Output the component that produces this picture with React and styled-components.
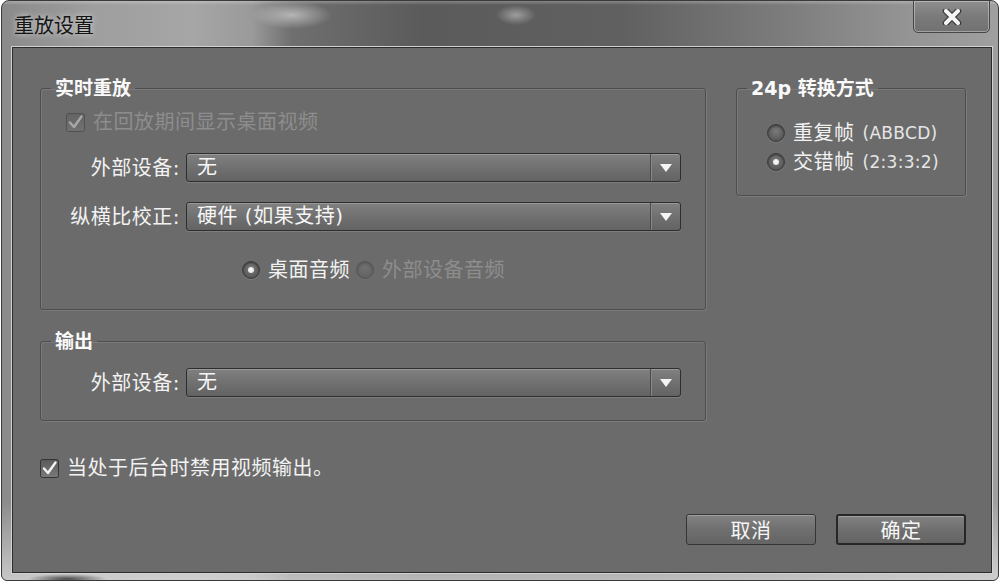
import React from 'react';
import styled, { createGlobalStyle } from 'styled-components';

const GlobalStyle = createGlobalStyle`
  html, body {
    margin: 0;
    padding: 0;
    background: #fff;
  }
  body {
    font-family: "DejaVu Sans", "Noto Sans CJK SC", sans-serif;
  }
  * {
    box-sizing: border-box;
  }
`;

const Window = styled.div`
  width: 998px;
  height: 581px;
  margin-left: 1px;
  border: 1px solid #3a3a3a;
  border-radius: 8px 8px 6px 6px;
  display: flex;
  flex-direction: column;
  overflow: hidden;
  background:
    radial-gradient(ellipse 40px 14px at 290px 14px, rgba(210,210,210,0.7), transparent),
    radial-gradient(ellipse 20px 10px at 514px 14px, rgba(200,200,200,0.6), transparent),
    radial-gradient(ellipse 40px 5px at 65px 578px, rgba(40,40,40,0.8), transparent),
    linear-gradient(180deg, rgba(255,255,255,0.25) 0, transparent 4px, transparent 500px, rgba(225,225,225,0.7) 100%),
    linear-gradient(90deg, #8a8a8a 0, #9e9e9e 90px, #a6a6a6 190px, #9a9a9a 250px, #6f6f6f 290px, #5b5b5b 420px, #606060 620px, #7c7c7c 780px, #939393 900px, #a0a0a0 100%);
`;

const TitleBar = styled.div`
  height: 46px;
  flex: none;
  display: flex;
  justify-content: space-between;
  align-items: flex-start;
  padding: 0 8px 0 12px;
`;

const Title = styled.div`
  margin-top: 11px;
  font-family: "Noto Sans CJK SC", sans-serif;
  font-size: 20px;
  line-height: 26px;
  color: #151515;
  text-shadow: 0 0 6px rgba(255, 255, 255, 0.75);
`;

const CloseButton = styled.div`
  width: 77px;
  height: 33px;
  margin-top: -1px;
  border: 1px solid #474747;
  border-radius: 0 0 5px 5px;
  background: linear-gradient(180deg, #8f8f8f, #7a7a7a 50%, #717171);
  box-shadow: inset 0 0 0 1px rgba(255, 255, 255, 0.35);
  display: flex;
  align-items: center;
  justify-content: center;
`;

const Frame = styled.div`
  flex: 1;
  display: flex;
  padding: 0 6px 7px 10px;
`;

const Client = styled.div`
  flex: 1;
  display: flex;
  flex-direction: column;
  background: #6b6b6b;
  border: 1px solid #2c2c2c;
  box-shadow: 0 0 0 1px #d2d2d2;
  padding: 28px 25px 0 27px;
  color: #f2f2f2;
  letter-spacing: 0.5px;
`;

const TopGrid = styled.div`
  display: grid;
  grid-template-columns: 666px 230px;
  column-gap: 30px;
  align-items: start;
`;

const Column = styled.div`
  display: flex;
  flex-direction: column;
  gap: 19px;
`;

const Group = styled.fieldset`
  margin: 0;
  min-width: 0;
  border: 1px solid #4e4e4e;
  border-radius: 3px;
  box-shadow: inset 1px 1px 0 rgba(255, 255, 255, 0.1), 1px 1px 0 rgba(255, 255, 255, 0.1);
  padding: ${(p) => p.$pad};
  display: flex;
  flex-direction: column;
`;

const Legend = styled.legend`
  margin-left: 10px;
  padding: 0 4px;
  font-family: "DejaVu Sans", "Noto Sans CJK SC", sans-serif;
  font-weight: bold;
  font-size: 19px;
  line-height: 24px;
  color: #fafafa;
  letter-spacing: 0;
`;

const CheckRow = styled.label`
  height: 24px;
  margin: ${(p) => p.$margin || 0};
  display: flex;
  align-items: center;
  gap: 8px;
  font-size: 20px;
  line-height: 24px;
  color: ${(p) => (p.$disabled ? '#8d8d8d' : '#f2f2f2')};
`;

const FieldRow = styled.div`
  display: grid;
  grid-template-columns: 139px 1fr;
  column-gap: 6px;
  align-items: center;
  margin-top: ${(p) => p.$top}px;
`;

const Label = styled.span`
  text-align: right;
  font-size: 20px;
  line-height: 24px;
  color: #f2f2f2;
`;

const Select = styled.div`
  height: 29px;
  display: flex;
  border: 1px solid #2e2e2e;
  border-radius: 3px;
  background: linear-gradient(180deg, #808080 0, #727272 45%, #636363 100%);
  box-shadow: inset 0 1px 0 rgba(255, 255, 255, 0.2), 0 1px 0 rgba(255, 255, 255, 0.12);
`;

const SelectValue = styled.span`
  flex: 1;
  padding-left: 10px;
  font-size: 20px;
  line-height: 27px;
  color: #f6f6f6;
`;

const SelectArrow = styled.span`
  width: 30px;
  border-left: 1px solid #4b4b4b;
  box-shadow: inset 1px 0 0 #888;
  display: flex;
  align-items: center;
  justify-content: center;
`;

const RadioRow = styled.div`
  display: flex;
  align-items: center;
  gap: ${(p) => p.$gap || 0}px;
  margin: ${(p) => p.$margin};
`;

const RadioItem = styled.label`
  height: 24px;
  display: flex;
  align-items: center;
  gap: 8px;
  font-size: 20px;
  line-height: 24px;
  color: ${(p) => (p.$disabled ? '#8d8d8d' : '#f2f2f2')};
  white-space: nowrap;
`;

const RadioDot = styled.span`
  position: relative;
  width: 18px;
  height: 18px;
  flex: none;
  border-radius: 50%;
  border: 1px solid #3c3c3c;
  background: radial-gradient(circle at 50% 40%, #7a7a7a, #5a5a5a 70%, #4d4d4d);
  box-shadow: inset 0 1px 2px rgba(0, 0, 0, 0.45), 0 1px 0 rgba(255, 255, 255, 0.12);
  opacity: ${(p) => (p.$disabled ? 0.45 : 1)};

  &::after {
    content: '';
    display: ${(p) => (p.$checked ? 'block' : 'none')};
    position: absolute;
    left: 5px;
    top: 5px;
    width: 6px;
    height: 6px;
    border-radius: 50%;
    background: radial-gradient(circle, #ffffff, #d8d8d8);
  }
`;

const Latin = styled.span`
  font-family: "DejaVu Sans", sans-serif;
  font-size: 17px;
  color: #e6e6e6;
  letter-spacing: 0.3px;
`;

const ButtonRow = styled.div`
  display: flex;
  justify-content: flex-end;
  gap: 20px;
  margin-top: 34px;
`;

const Button = styled.div`
  width: 130px;
  height: 31px;
  display: flex;
  align-items: center;
  justify-content: center;
  border: ${(p) => (p.$default ? '2px solid #272727' : '1px solid #353535')};
  border-radius: 3px;
  background: linear-gradient(180deg, #828282, #6f6f6f 50%, #646464);
  box-shadow: inset 0 1px 0 rgba(255, 255, 255, 0.25);
  font-size: 20px;
  color: #f6f6f6;
`;

const CheckBox = ({ faded }) => (
  <svg width="19" height="19" viewBox="0 0 19 19" style={{ opacity: faded ? 0.45 : 1, flex: 'none' }}>
    <defs>
      <linearGradient id={faded ? 'cbf' : 'cb'} x1="0" y1="0" x2="0" y2="1">
        <stop offset="0" stopColor="#5a5a5a" />
        <stop offset="1" stopColor="#7a7a7a" />
      </linearGradient>
    </defs>
    <rect x="0.5" y="0.5" width="18" height="18" rx="2" fill={`url(#${faded ? 'cbf' : 'cb'})`} stroke="#333" />
    <path d="M4 9.5 L8 14 L15.5 3.5" fill="none" stroke="#f4f4f4" strokeWidth="2.4" strokeLinecap="round" strokeLinejoin="round" />
  </svg>
);

const DownArrow = () => (
  <svg width="12" height="8" viewBox="0 0 12 8">
    <polygon points="0,0 12,0 6,8" fill="#f4f4f4" />
  </svg>
);

const CloseGlyph = () => (
  <svg width="20" height="16" viewBox="0 0 20 16">
    <path d="M4 2 L16 14 M16 2 L4 14" stroke="#3a3a3a" strokeWidth="6.5" strokeLinecap="round" />
    <path d="M4 2 L16 14 M16 2 L4 14" stroke="#f4f4f4" strokeWidth="4" strokeLinecap="round" />
  </svg>
);

const Dropdown = ({ value }) => (
  <Select>
    <SelectValue>{value}</SelectValue>
    <SelectArrow>
      <DownArrow />
    </SelectArrow>
  </Select>
);

export default function App() {
  return (
    <>
      <GlobalStyle />
      <Window>
        <TitleBar>
          <Title>重放设置</Title>
          <CloseButton>
            <CloseGlyph />
          </CloseButton>
        </TitleBar>
        <Frame>
          <Client>
            <TopGrid>
              <Column>
                <Group $pad="0 24px 27px 0">
                  <Legend>实时重放</Legend>
                  <CheckRow $disabled $margin="10px 0 0 25px">
                    <CheckBox faded />
                    在回放期间显示桌面视频
                  </CheckRow>
                  <FieldRow $top={19}>
                    <Label>外部设备:</Label>
                    <Dropdown value="无" />
                  </FieldRow>
                  <FieldRow $top={20}>
                    <Label>纵横比校正:</Label>
                    <Dropdown value="硬件 (如果支持)" />
                  </FieldRow>
                  <RadioRow $margin="27px 0 0 201px" $gap={6}>
                    <RadioItem>
                      <RadioDot $checked />
                      桌面音频
                    </RadioItem>
                    <RadioItem $disabled>
                      <RadioDot $disabled />
                      外部设备音频
                    </RadioItem>
                  </RadioRow>
                </Group>
                <Group $pad="0 24px 23px 0">
                  <Legend>输出</Legend>
                  <FieldRow $top={15}>
                    <Label>外部设备:</Label>
                    <Dropdown value="无" />
                  </FieldRow>
                </Group>
              </Column>
              <Group $pad="0 0 21px 0">
                <Legend>24p 转换方式</Legend>
                <RadioRow $margin="21px 0 0 30px">
                  <RadioItem>
                    <RadioDot />
                    重复帧 <Latin>(ABBCD)</Latin>
                  </RadioItem>
                </RadioRow>
                <RadioRow $margin="5px 0 0 30px">
                  <RadioItem>
                    <RadioDot $checked />
                    交错帧 <Latin>(2:3:3:2)</Latin>
                  </RadioItem>
                </RadioRow>
              </Group>
            </TopGrid>
            <CheckRow $margin="35px 0 0 0">
              <CheckBox />
              当处于后台时禁用视频输出。
            </CheckRow>
            <ButtonRow>
              <Button>取消</Button>
              <Button $default>确定</Button>
            </ButtonRow>
          </Client>
        </Frame>
      </Window>
    </>
  );
}
